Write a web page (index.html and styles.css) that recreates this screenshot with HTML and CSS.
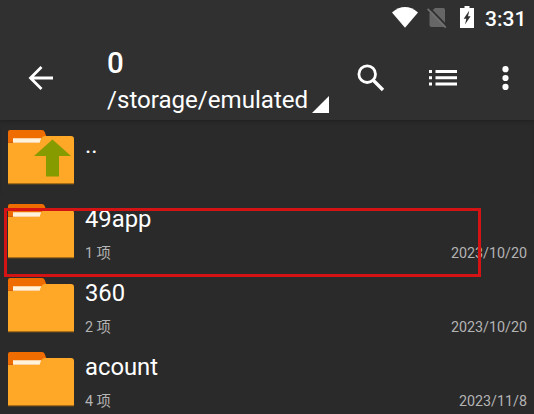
FILE: index.html
```html
<!DOCTYPE html>
<html lang="zh">
<head>
    <meta charset="UTF-8">
    <meta name="viewport" content="width=device-width, initial-scale=1.0">
    <title>/storage/emulated/0</title>
    <link rel="stylesheet" href="styles.css">
</head>
<body>
    <!-- shared folder icon -->
    <svg class="defs" width="0" height="0">
        <symbol id="folder" viewBox="0 0 66 55">
            <path fill="#ef6c00" d="M0 2Q0 0 2 0H34Q36 0 36.700 2L39 8V20H0z"/>
            <path fill="#d8600a" d="M0 12H5V20H0z"/>
            <path fill="#ffa726" d="M0 13H29Q31 13 32 11L33.500 8Q34.500 6 37 6H63Q66 6 66 9V53.500H0z"/>
            <path fill="#fff3dc" d="M5 8.300H33.300L31.500 12.800H5z"/>
            <path fill="#a96d16" d="M0 53H66V54.300H0z"/>
        </symbol>
    </svg>

    <header>
        <div class="status-bar">
            <svg class="wifi" width="26" height="21" viewBox="0 0 26 21"><path fill="#fff" d="M0 5.500Q13-5.300 26 5.500L13 20.800z"/></svg>
            <svg class="sim" width="20" height="22" viewBox="0 0 20 22">
                <path fill="#666" d="M8 1H16.500Q18 1 18 2.500V20H4.500Q2.500 20 2.500 18V6z"/>
                <path stroke="#303030" stroke-width="1.800" d="M2 .500L20 19"/>
                <path stroke="#707070" stroke-width="1.800" d="M.600 1.800L18.800 20.600"/>
            </svg>
            <svg class="battery" width="14" height="22" viewBox="0 0 14 22">
                <path fill="#fff" d="M4.500 0H9.500V2H14V22H0V2H4.500z"/>
                <path fill="#303030" d="M9.300 4.500L3.700 12.800H6.300L5 18.500L10.600 10.200H8z"/>
            </svg>
            <span class="clock">3:31</span>
        </div>
        <div class="toolbar">
            <svg class="back" width="26" height="24" viewBox="0 0 26 24"><path fill="none" stroke="#fff" stroke-width="2.800" d="M25 12H3M13.500 1L2.500 12L13.500 23"/></svg>
            <div class="titles">
                <div class="title">0</div>
                <div class="path">/storage/emulated<svg class="corner" width="17" height="17" viewBox="0 0 17 17"><path fill="#fff" d="M17 0V17H0z"/></svg></div>
            </div>
            <svg class="search" width="28" height="28" viewBox="0 0 28 28">
                <circle cx="10.200" cy="10.200" r="8.300" fill="none" stroke="#fff" stroke-width="2.800"/>
                <path stroke="#fff" stroke-width="3.400" d="M16.500 16.500L26 26"/>
            </svg>
            <svg class="list" width="28" height="16" viewBox="0 0 28 16"><path fill="#fff" d="M0 0H3V3H0zM6.500 0H28V3H6.500zM0 6.300H3V9.300H0zM6.500 6.300H28V9.300H6.500zM0 12.600H3V15.600H0zM6.500 12.600H28V15.600H6.500z"/></svg>
            <svg class="more" width="7" height="24" viewBox="0 0 7 24"><g fill="#fff"><circle cx="3.500" cy="3.200" r="3.100"/><circle cx="3.500" cy="12" r="3.100"/><circle cx="3.500" cy="20.900" r="3.100"/></g></svg>
        </div>
    </header>

    <main>
        <div class="row">
            <svg class="icon" width="66" height="55">
                <use href="#folder"/>
                <path fill="#869b00" d="M44.500 9.500L63 26H51V46.500H38V26H26z"/>
            </svg>
            <div class="info"><div class="name">..</div></div>
        </div>
        <div class="row">
            <svg class="icon" width="66" height="55"><use href="#folder"/></svg>
            <div class="info">
                <div class="name">49app</div>
                <div class="meta"><span class="count">1 项</span><span class="date">2023/10/20</span></div>
            </div>
            <div class="highlight"></div>
        </div>
        <div class="row">
            <svg class="icon" width="66" height="55"><use href="#folder"/></svg>
            <div class="info">
                <div class="name">360</div>
                <div class="meta"><span class="count">2 项</span><span class="date">2023/10/20</span></div>
            </div>
        </div>
        <div class="row">
            <svg class="icon" width="66" height="55"><use href="#folder"/></svg>
            <div class="info">
                <div class="name">acount</div>
                <div class="meta"><span class="count">4 项</span><span class="date">2023/11/8</span></div>
            </div>
        </div>
    </main>
</body>
</html>
```

FILE: styles.css
```css
* {
    box-sizing: border-box;
}
body {
    margin: 0;
    height: 414px;
    overflow: hidden;
    background: #2a2a2a;
    color: #fff;
    font-family: Roboto, "Noto Sans CJK SC", sans-serif;
}
svg {
    display: block;
    flex: none;
}
.defs {
    position: absolute;
}
header {
    height: 120px;
    background: #303030;
}
.status-bar {
    display: flex;
    height: 36px;
    padding: 6px 8px 0 0;
    justify-content: flex-end;
}
.wifi {
    margin-top: 1px;
}
.sim {
    margin: 1px 0 0 9px;
}
.battery {
    margin-left: 13px;
}
.clock {
    width: 41px;
    margin-left: 11px;
    font-size: 21px;
    font-weight: 500;
    line-height: 26px;
    white-space: nowrap;
}
.toolbar {
    display: flex;
    height: 84px;
    padding: 0 25px 0 28px;
    align-items: center;
}
.titles {
    flex: 1;
    margin-left: 53px;
    padding-top: 7px;
}
.title {
    font-size: 29.5px;
    font-weight: 500;
    line-height: 37px;
}
.path {
    display: flex;
    font-size: 24.1px;
    line-height: 36px;
    white-space: nowrap;
}
.corner {
    margin: 14px 0 0 4px;
}
.list {
    margin-left: 44px;
}
.more {
    margin-left: 45px;
}
.row {
    position: relative;
    display: flex;
    height: 74px;
    padding: 10px 7px 0 8px;
}
.info {
    flex: 1;
    margin-left: 11px;
}
.name {
    font-size: 23.8px;
    line-height: 30px;
}
.meta {
    display: flex;
    margin-top: 9px;
    justify-content: space-between;
    font-size: 14.3px;
    line-height: 20px;
    color: #b4b4b4;
}
.highlight {
    position: absolute;
    left: 4px;
    top: 14px;
    width: 477px;
    height: 69px;
    border: 3px solid #d41414;
    z-index: 1;
}
main .row:first-child {
    box-shadow: inset 0 4px 4px -3px #202020;
}
```
